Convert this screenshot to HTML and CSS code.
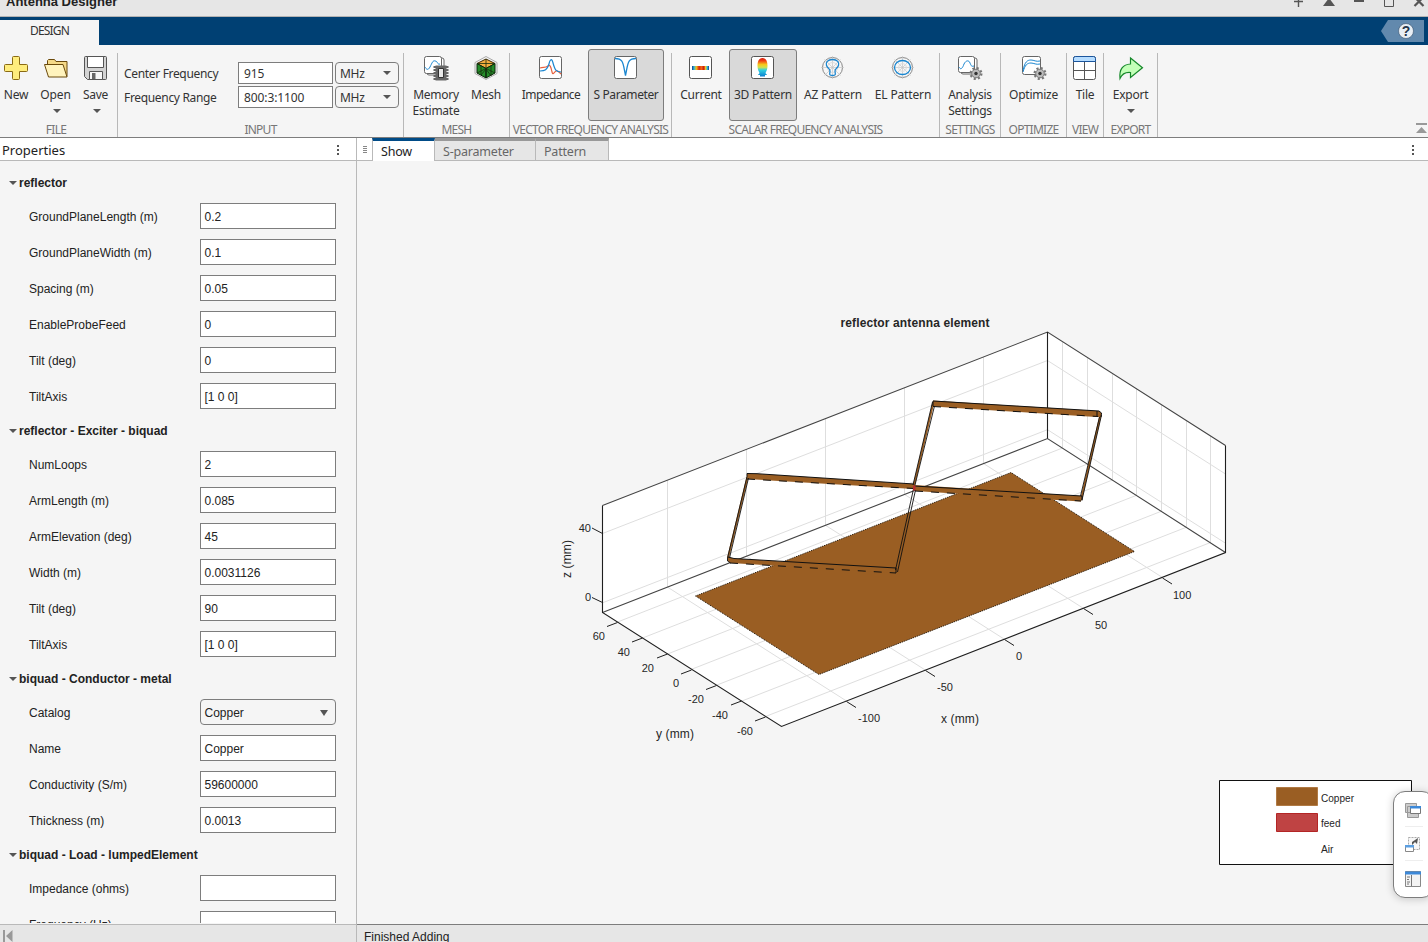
FILE: index.html
```html
<!DOCTYPE html>
<html lang="en">
<head>
<meta charset="utf-8">
<title>Antenna Designer</title>
<link rel="stylesheet" href="styles.css">
</head>
<body>
<div class="app">
  <header class="titlebar">
    <span class="title">Antenna Designer</span>
    <svg class="winctl" width="138" height="16" viewBox="1290 0 138 16"><path d="M1294 1.500h9M1298.500 0v7" stroke="#555" stroke-width="1.400"/><path d="M1323 6l6-8 6 8z" fill="#555"/><path d="M1354 1h10" stroke="#555" stroke-width="2"/><path d="M1384.500-3v9.500h9v-9.500" fill="none" stroke="#555"/><path d="M1414.500 6l9-9M1423.500 6l-9-9" stroke="#555" stroke-width="2.200"/></svg>
  </header>
  <div class="ribbon-tabs">
    <div class="ribbon-tab">DESIGN</div>
    <svg class="help" width="43" height="22" viewBox="0 0 43 22"><path d="M0 11L7 0h36v22H7z" fill="#6289ad"/><circle cx="25" cy="11" r="7.500" fill="#e8eef4" stroke="#37506c" stroke-width=".6"/><text x="25" y="16" text-anchor="middle" class="help-mark">?</text></svg>
  </div>

  <div class="toolstrip">
    <section class="sec s-file">
      <div class="btns">
        <div class="btn b-new"><svg width="26" height="26" viewBox="0 0 26 26"><path d="M10.500 1.500h5a1 1 0 0 1 1 1v7h7a1 1 0 0 1 1 1v5a1 1 0 0 1-1 1h-7v7a1 1 0 0 1-1 1h-5a1 1 0 0 1-1-1v-7h-7a1 1 0 0 1-1-1v-5a1 1 0 0 1 1-1h7v-7a1 1 0 0 1 1-1z" fill="#ffed7d" stroke="#8a6a14"/></svg><span>New</span></div>
        <div class="btn b-open"><svg width="26" height="26" viewBox="0 0 26 26"><path d="M4.500 9.500V5.500l1-1h6l1.500 2h11v15h-18z" fill="#f5d987" stroke="#6b4a0c"/><path d="M1.500 9.500h18.500l4 12.500H5.500z" fill="#fff3bd" stroke="#6b4a0c"/></svg><span>Open</span><i class="down"></i></div>
        <div class="btn b-save"><svg width="26" height="26" viewBox="0 0 26 26"><path d="M2.500 1.500h20a1 1 0 0 1 1 1v21a1 1 0 0 1-1 1h-18l-3-3v-19a1 1 0 0 1 1-1z" fill="#d3d3d3" stroke="#555"/><path d="M4.500 1.500h16v11h-16z" fill="#fff" stroke="#555"/><path d="M6.500 16.500h13v8h-13z" fill="#f7f7f7" stroke="#555"/><path d="M9 18h3.500v6H9z" fill="#666"/></svg><span>Save</span><i class="down"></i></div>
      </div>
      <h2>FILE</h2>
    </section>
    <section class="sec s-input">
      <div class="inputs">
        <label>Center Frequency</label><div class="field">915</div><div class="combo">MHz<i class="down"></i></div>
        <label>Frequency Range</label><div class="field">800:3:1100</div><div class="combo">MHz<i class="down"></i></div>
      </div>
      <h2>INPUT</h2>
    </section>
    <section class="sec s-mesh">
      <div class="btns">
        <div class="btn b-mem"><svg width="26" height="26" viewBox="0 0 26 26"><rect x="4" y="3" width="17" height="17" rx="2" fill="#fff" stroke="#666"/><rect x="1.500" y="1.500" width="17" height="17" rx="2" fill="#fff" stroke="#666"/><path d="M2 12c1 2 3 4 5 0 2-4 3-7 5-6 3 0 2 4 5 3" fill="none" stroke="#1a86d0"/><path d="M12.500 10.500h11v15h-11z" fill="#666"/><path d="M10.500 12h15M10.500 15h15M10.500 18h15M10.500 21h15M10.500 24h15" stroke="#666" stroke-width="1.800"/><path d="M15.500 13.500h5v9h-5z" fill="#e8e8e8" stroke="#333"/></svg><span>Memory<br>Estimate</span></div>
        <div class="btn b-msh"><svg width="26" height="26" viewBox="0 0 26 26"><path d="M13 1.500l11 6v11L13 24.500l-11-6v-11z" fill="#f5f5f5" stroke="#aaa"/><path d="M13 4l9 4.500-9 5-9-5z" fill="#f3ad3f" stroke="#3b2604"/><path d="M4 8.500l9 5V23l-9-5zM22 8.500l-9 5V23l9-5z" fill="#238c28" stroke="#0a250a"/><path d="M13 4v9.500M4 8.500h18M13 13.500L4 18M8 11v9l5-6 5 7V11M13 13.500l9 4.500" fill="none" stroke="#172d0e" stroke-width=".8"/></svg><span>Mesh</span></div>
      </div>
      <h2>MESH</h2>
    </section>
    <section class="sec s-vec">
      <div class="btns">
        <div class="btn b-imp"><svg width="26" height="26" viewBox="0 0 26 26"><rect x="1.500" y="1.500" width="22" height="22" rx="2" fill="#fff" stroke="#666"/><path d="M2 13c4-1 5 0 8-2 2-2 3 1 4 6 1 4 2 0 4-1s3 1 5 3" fill="none" stroke="#e8603c" stroke-width="1.200"/><path d="M2 16c5 0 7-1 9-7 1-5 3-6 4-1 2 7 3 9 8 9" fill="none" stroke="#1a86d0" stroke-width="1.200"/></svg><span>Impedance</span></div>
        <div class="btn b-spar sel"><svg width="26" height="26" viewBox="0 0 26 26"><rect x="1.500" y="1.500" width="22" height="22" rx="2" fill="#fff" stroke="#666"/><path d="M2 3.500c7 0 8 3 9.500 12l1 5 1-5C15 6.500 16 3.500 23 3.500" fill="none" stroke="#1a86d0" stroke-width="1.300"/></svg><span>S Parameter</span></div>
      </div>
      <h2>VECTOR FREQUENCY ANALYSIS</h2>
    </section>
    <section class="sec s-sca">
      <div class="btns">
        <div class="btn b-cur"><svg width="26" height="26" viewBox="0 0 26 26"><defs><linearGradient id="jet"><stop offset="0" stop-color="#12358a"/><stop offset=".12" stop-color="#29b8dc"/><stop offset=".25" stop-color="#f2c21c"/><stop offset=".42" stop-color="#d8200e"/><stop offset=".55" stop-color="#f06a15"/><stop offset=".7" stop-color="#c81410"/><stop offset=".8" stop-color="#f2d32c"/><stop offset=".9" stop-color="#29b8dc"/><stop offset="1" stop-color="#12358a"/></linearGradient><linearGradient id="lobe" x2="0" y2="1"><stop offset="0" stop-color="#d8200e"/><stop offset=".15" stop-color="#f03c14"/><stop offset=".35" stop-color="#f6c51b"/><stop offset=".5" stop-color="#d5e04a"/><stop offset=".65" stop-color="#2fd0e0"/><stop offset="1" stop-color="#0b7fd0"/></linearGradient></defs><rect x="1.500" y="1.500" width="22" height="22" rx="2" fill="#fff" stroke="#555"/><path d="M4 11h17v4H4z" fill="url(#jet)"/></svg><span>Current</span></div>
        <div class="btn b-3d sel"><svg width="26" height="26" viewBox="0 0 26 26"><rect x="1.500" y="1.500" width="22" height="22" rx="2" fill="#fff" stroke="#555"/><path d="M12.500 3c4 0 5 4 5 8 0 3-1 5-2 7 0 1 1.500 1 1.500 2h-2v1.500h-5V20H8c0-1 1.500-1 1.500-2-1-2-2-4-2-7 0-4 1-8 5-8z" fill="url(#lobe)"/></svg><span>3D Pattern</span></div>
        <div class="btn b-az"><svg width="26" height="26" viewBox="0 0 26 26"><circle cx="12.500" cy="12.500" r="10" fill="#f7f7f7" stroke="#888"/><path d="M12.500 1v23M1 12.500h23M4.500 4.500l16 16M20.500 4.500l-16 16" stroke="#c4c4c4" stroke-width=".7"/><circle cx="12.500" cy="12.500" r="5" fill="none" stroke="#ddd"/><path d="M12.500 4.500c5 0 7 3 6 6s-4 3-3.500 6 1 4-2.500 4-3-1-2.500-4-2.500-3-3.500-6 1-6 6-6z" fill="none" stroke="#1a86d0" stroke-width="1.300"/></svg><span>AZ Pattern</span></div>
        <div class="btn b-el"><svg width="26" height="26" viewBox="0 0 26 26"><circle cx="12.500" cy="12.500" r="10" fill="#f7f7f7" stroke="#888"/><path d="M12.500 1v23M1 12.500h23M4.500 4.500l16 16M20.500 4.500l-16 16" stroke="#c4c4c4" stroke-width=".7"/><circle cx="12.500" cy="12.500" r="4" fill="none" stroke="#ddd"/><ellipse cx="12.500" cy="12.500" rx="8" ry="7" fill="none" stroke="#1a86d0" stroke-width="1.300"/></svg><span>EL Pattern</span></div>
      </div>
      <h2>SCALAR FREQUENCY ANALYSIS</h2>
    </section>
    <section class="sec s-set">
      <div class="btns">
        <div class="btn b-ana"><svg width="26" height="26" viewBox="0 0 26 26"><rect x="4" y="3" width="16" height="16" rx="2" fill="#fff" stroke="#666"/><rect x="1.500" y="1.500" width="16" height="16" rx="2" fill="#fff" stroke="#666"/><path d="M2 12c2 4 4 0 5-3 2-4 5-4 6-1 1 2 1 4 4 3" fill="none" stroke="#1a86d0"/><g id="gear"><circle cx="19" cy="18.500" r="5.400" fill="none" stroke="#777" stroke-width="2.200" stroke-dasharray="2.100 2.140"/><circle cx="19" cy="18.500" r="4.300" fill="#bbb" stroke="#777"/><circle cx="19" cy="18.500" r="1.700" fill="#333"/></g></svg><span>Analysis<br>Settings</span></div>
      </div>
      <h2>SETTINGS</h2>
    </section>
    <section class="sec s-opt">
      <div class="btns">
        <div class="btn b-opt"><svg width="26" height="26" viewBox="0 0 26 26"><rect x="1.500" y="1.500" width="18" height="18" rx="2" fill="#fff" stroke="#666"/><path d="M2 15c2-8 4-10 8-10 3 0 5 2 9 1M2 17c2-7 4-9 8-9 3 0 5 2 9 1" fill="none" stroke="#1a86d0"/><use href="#gear"/></svg><span>Optimize</span></div>
      </div>
      <h2>OPTIMIZE</h2>
    </section>
    <section class="sec s-view">
      <div class="btns">
        <div class="btn b-tile"><svg width="26" height="26" viewBox="0 0 26 26"><rect x="1.500" y="1.500" width="22" height="23" rx="2" fill="#fff" stroke="#555"/><path d="M12.500 7v17M2 15.500h21" stroke="#555"/><path d="M1.500 6.500v-3a2 2 0 0 1 2-2h18a2 2 0 0 1 2 2v3z" fill="#b5dcff" stroke="#1b559d"/></svg><span>Tile</span></div>
      </div>
      <h2>VIEW</h2>
    </section>
    <section class="sec s-exp">
      <div class="btns">
        <div class="btn b-exp"><svg width="26" height="26" viewBox="0 0 26 26"><path d="M12.500 3L24.500 12.700 12.500 22.500V17.500C7 17 4 19 2 23.500 1 14 5 9.500 12.500 9z" fill="#c3ffb8" stroke="#15882a" stroke-width="1.200"/></svg><span>Export</span><i class="down"></i></div>
      </div>
      <h2>EXPORT</h2>
    </section>
    <svg class="collapse" width="11" height="11" viewBox="0 0 11 11"><path d="M0 0h11v2H0zM0 10l5.500-6 5.500 6z" fill="#999"/></svg>
  </div>

  <div class="workspace">
    <aside class="props">
      <div class="props-head"><span>Properties</span><i class="dots"></i></div>
      <div class="props-body">
        <h3><i class="down"></i>reflector</h3>
        <div class="row"><label>GroundPlaneLength (m)</label><div class="val">0.2</div></div>
        <div class="row"><label>GroundPlaneWidth (m)</label><div class="val">0.1</div></div>
        <div class="row"><label>Spacing (m)</label><div class="val">0.05</div></div>
        <div class="row"><label>EnableProbeFeed</label><div class="val">0</div></div>
        <div class="row"><label>Tilt (deg)</label><div class="val">0</div></div>
        <div class="row"><label>TiltAxis</label><div class="val">[1 0 0]</div></div>
        <h3><i class="down"></i>reflector - Exciter - biquad</h3>
        <div class="row"><label>NumLoops</label><div class="val">2</div></div>
        <div class="row"><label>ArmLength (m)</label><div class="val">0.085</div></div>
        <div class="row"><label>ArmElevation (deg)</label><div class="val">45</div></div>
        <div class="row"><label>Width (m)</label><div class="val">0.0031126</div></div>
        <div class="row"><label>Tilt (deg)</label><div class="val">90</div></div>
        <div class="row"><label>TiltAxis</label><div class="val">[1 0 0]</div></div>
        <h3><i class="down"></i>biquad - Conductor - metal</h3>
        <div class="row"><label>Catalog</label><div class="val pick">Copper<i class="down"></i></div></div>
        <div class="row"><label>Name</label><div class="val">Copper</div></div>
        <div class="row"><label>Conductivity (S/m)</label><div class="val">59600000</div></div>
        <div class="row"><label>Thickness (m)</label><div class="val">0.0013</div></div>
        <h3><i class="down"></i>biquad - Load - lumpedElement</h3>
        <div class="row"><label>Impedance (ohms)</label><div class="val"></div></div>
        <div class="row"><label>Frequency (Hz)</label><div class="val"></div></div>
      </div>
    </aside>
    <main class="docs">
      <div class="doc-tabs">
        <svg class="grip" width="15" height="22" viewBox="0 0 15 22"><path d="M6 8.500h4M6 10.500h4M6 12.500h4M6 14.500h4" stroke="#888"/></svg>
        <div class="tab active">Show</div><div class="tab t-s">S-parameter</div><div class="tab t-p">Pattern</div>
        <i class="dots"></i>
      </div>
      <svg class="plot" width="1071" height="763" viewBox="357 161 1071 763">
        <path d="M602.500 505.500L1047.500 332l178 113.500v107L781.500 726.500l-179-114z" fill="#fff"/>
        <g class="grid">
          <path d="M667.500 480.200V587.100L846.500 701M746.500 449.400V556.200l179 114M825.500 418.600V525.300l179 114M904.500 387.800V494.400l179 114M983.500 357V463.500l179 114"/>
          <path d="M1062.500 341.600V448l-445 174M1087.500 357.500V464l-445 174M1112.500 373.400V480l-445 174M1136.500 388.700V495.300l-445 174M1161.500 404.700V511.200l-445 174M1186.500 420.600V527.200l-445 174M1210.500 435.900V542.500l-445 174"/>
          <path d="M602.500 533.500L1047.500 360.500l178 113.500M602.500 602.800L1047.500 429.700l178 113.500"/>
        </g>
        <path class="axis soft" d="M602.500 505.500L1047.500 332l178 113.500M602.500 612.500L1047.500 438.500l178 114"/>
        <path class="axis" d="M602.500 505.500v107l179 114 444-174v-107M1047.500 332v106.500"/>
        <path class="axis tick" d="M592 528l10.500 5.500M592 597.500l10.500 5M617.500 622.500l-10.500 4M642.500 638l-10.500 4M667.500 654l-10.500 4M691.500 670l-10.500 4M716.500 685.500l-10.500 4M741.500 701l-10.500 4M765.500 717l-10.500 4M846.500 701.500l9.500 6M925.500 670.500l9.500 6M1004.500 639.500l9.500 6M1083.500 608.500l9.500 6M1162.500 578l9.500 6"/>
        <path d="M695.500 596L1011 472.500l123.500 79L819 674.500z" fill="#9a5e23" stroke="#1b1208" stroke-dasharray="1 1"/>
        <g fill="#9a5e23">
          <path d="M747 473.500l10 .2L914 484v5L747 479zM914 485l168 11-1 5.500L915 491zM933 400.500L1099 411l2.500 2-.5 4h-5L933 406.500zM728 557l6 1.500L896 568v5L730 563l-3-3z"/>
        </g>
        <g class="arm">
          <path class="core" d="M747.500 477L728 558M933.500 402L914 485M1100.500 415L1081 500"/>
          <path d="M747 473.500l10 .2L914 484M914 486l168 10v4.500M933 406v-5L1099 411l2.500 2-.5 4M728 557l6 1.500L896 568v5M1097 411v5"/>
          <path d="M747 479L914 488.500M915 491l166 10M933 406.500L1098 416.500M730 563L896 573" stroke-dasharray="8 8"/>
          <path class="rim" d="M747 473.500v3L727.500 558M748.500 478L729.500 558M932.500 402L913 485M934.500 406L915 485M1101.500 415L1082 500M1099.500 417L1080.500 496M913.500 489L895.500 570M915.500 490L897.500 572M727.500 558v3l3 2"/>
        </g>
        <path d="M913 485.500h2.500v5H913z" fill="#b82c2c"/>
        <g class="ticks">
          <text x="591" y="532" text-anchor="end">40</text><text x="591" y="601" text-anchor="end">0</text>
          <text x="605" y="640" text-anchor="end">60</text><text x="630" y="656" text-anchor="end">40</text><text x="654" y="672" text-anchor="end">20</text><text x="679" y="687" text-anchor="end">0</text><text x="704" y="703" text-anchor="end">-20</text><text x="728" y="719" text-anchor="end">-40</text><text x="753" y="735" text-anchor="end">-60</text>
          <text x="858" y="722">-100</text><text x="937" y="691">-50</text><text x="1016" y="660">0</text><text x="1095" y="629">50</text><text x="1173" y="599">100</text>
        </g>
        <text x="941" y="723" textLength="38">x (mm)</text><text x="656" y="738" textLength="38">y (mm)</text><text transform="translate(571 578) rotate(-90)" textLength="38">z (mm)</text>
        <text x="840.500" y="327" class="plot-title" textLength="149">reflector antenna element</text>
        <path d="M1219.500 780.500h192v84h-192z" fill="#fff" stroke="#111"/>
        <path d="M1276.500 787.500h41v18h-41z" fill="#9a5e23" stroke="#b07a44"/><path d="M1276.500 813.500h41v18h-41z" fill="#bf4343" stroke="#b32525"/>
        <g class="ticks"><text x="1321" y="802" textLength="33" lengthAdjust="spacingAndGlyphs">Copper</text><text x="1321" y="827" textLength="19.500" lengthAdjust="spacingAndGlyphs">feed</text><text x="1321" y="853" textLength="12.500" lengthAdjust="spacingAndGlyphs">Air</text></g>
      </svg>
      <div class="dock">
        <svg width="18" height="18" viewBox="0 0 18 18"><path d="M1.500 1.500h11v9h-11zM3.500 4.500h11v11h-11z" fill="#ccc" stroke="#999"/><path d="M6.500 4.500h10v7h-10z" fill="#fff" stroke="#777"/><path d="M6 4h11v2.500H6z" fill="#3c88d8"/></svg>
        <hr>
        <svg width="18" height="18" viewBox="0 0 18 18"><path d="M4.500 1.500h11v12h-11z" fill="#f7f7f7" stroke="#aaa" stroke-dasharray="2 1"/><path d="M8 6l6-4-1 6-2-2-3 3z" fill="#555"/><path d="M1.500 9.500h8v6h-8z" fill="#fff" stroke="#888"/><path d="M1 9h9v2.500H1z" fill="#5b9fe2"/></svg>
        <hr>
        <svg width="18" height="18" viewBox="0 0 18 18"><path d="M1.500 1.500h15v15h-15z" fill="#f3f3f3" stroke="#888"/><path d="M7.500 5v11M3 7h3M3 9.500h2M3 12h3M3 14h2" stroke="#777"/><path d="M1 1.500h16v3H1z" fill="#3c88d8"/></svg>
      </div>
    </main>
  </div>
  <footer class="status">
    <div class="st-left"><svg width="10" height="12" viewBox="0 0 10 12"><path d="M0 0h2v12H0zM9.500 0v12L3 6z" fill="#999"/></svg></div>
    <div class="st-right">Finished Adding</div>
  </footer>
</div>
</body>
</html>
```
FILE: styles.css
```css
* { box-sizing: border-box; }
html, body { margin: 0; overflow: hidden; }
body { font: 12px/16px "Liberation Sans", Arial, sans-serif; color: #222; }
svg { display: block; flex: none; }
.app { width: 1428px; height: 942px; display: flex; flex-direction: column; background: #f5f5f5; overflow: hidden; }
.titlebar { flex: none; height: 17px; background: #e6e6e6; border-bottom: 1px solid #b3b3b3; display: flex; justify-content: space-between; overflow: hidden; }
.title { font-weight: bold; font-size: 13px; line-height: 16px; margin: -6px 0 0 6px; }
.ribbon-tabs { flex: none; height: 28px; background: #004073; display: flex; justify-content: space-between; padding: 3px 4px 0 0; }
.ribbon-tab { width: 99px; background: #f5f5f5; text-align: center; font: 12px/22px "Noto Sans", sans-serif; letter-spacing: -.8px; color: #333; }
.help-mark { font: bold 14px "Liberation Sans", sans-serif; fill: #26364a; }
.toolstrip { position: relative; flex: none; height: 93px; display: flex; border-bottom: 1px solid #7d7d7d; padding-top: 4px; font-family: "Noto Sans", sans-serif; color: #333; }
.sec { flex: none; display: flex; flex-direction: column; height: 88px; background: linear-gradient(#b8b8b8, #b8b8b8) right 0 top 4px / 1px 84px no-repeat; }
.sec h2 { margin: 1px 0 0; font-weight: normal; font-size: 12px; line-height: 16px; height: 15px; color: #777; text-align: center; white-space: nowrap; letter-spacing: -.75px; padding-right: 1px; }
.s-file h2 { padding-right: 6px; }
.btns { display: flex; height: 72px; }
.btn { flex: none; display: flex; flex-direction: column; align-items: center; height: 72px; padding-top: 5px; border: 1px solid transparent; text-align: center; white-space: nowrap; font-size: 12px; letter-spacing: -.25px; }
.btn span { margin-top: 6px; }
.sel { background: #d9d9d9; border-color: #7d7d7d; border-radius: 3px; }
.down { display: block; flex: none; width: 0; height: 0; border: 4px solid transparent; border-top: 4px solid #555; border-bottom: 0; }
.btn .down { margin-top: 6px; }
.s-file { width: 118px; } .s-input { width: 286px; } .s-mesh { width: 106px; } .s-vec { width: 162px; } .s-sca { width: 268px; }
.s-set { width: 61px; } .s-opt { width: 66px; } .s-view { width: 37px; } .s-exp { width: 54px; }
.b-new { width: 32px; } .b-open { width: 47px; letter-spacing: -.1px; } .b-save { width: 33px; }
.b-save .down, .b-open .down { margin-left: 2px; }
.b-mem { width: 54px; margin: 0 5px; } .b-msh { width: 36px; }
.b-imp { width: 70px; margin: 0 2px 0 6px; letter-spacing: -.55px; } .b-spar { width: 76px; letter-spacing: -.4px; }
.b-cur { width: 50px; margin: 0 3px 0 4px; } .b-3d { width: 68px; margin-right: 2px; } .b-az { width: 68px; margin-right: 2px; letter-spacing: -.15px; } .b-el { width: 68px; letter-spacing: -.15px; }
.b-ana { width: 60px; } .b-opt { width: 65px; } .b-tile { width: 36px; } .b-exp { width: 53px; }
.inputs { height: 72px; display: grid; grid-template-columns: 114px 95px 66px; grid-auto-rows: 22px; row-gap: 2px; padding: 13px 0 0 6px; font-size: 12px; align-items: center; }
.inputs label { letter-spacing: -.33px; padding-top: 1px; }
.field { height: 22px; border: 1px solid #7d7d7d; background: #fff; padding-left: 5px; line-height: 22px; letter-spacing: -.1px; }
.combo { margin-left: 2px; height: 22px; border: 1px solid #7d7d7d; border-radius: 4px; padding: 1px 7px 0 4px; display: flex; align-items: center; justify-content: space-between; letter-spacing: -.3px; }
.combo .down { margin-top: -2px; }
.collapse { position: absolute; right: 1px; top: 78px; }
.workspace { flex: none; height: 786px; display: flex; }
.props { flex: none; width: 357px; border-right: 1px solid #b9b9b9; }
.props-head { height: 23px; background: #fff; border-bottom: 1px solid #b9b9b9; display: flex; align-items: center; justify-content: space-between; padding: 2px 17px 0 2px; font: 13px/20px "Noto Sans", sans-serif; }
.dots { width: 2px; height: 10px; background: linear-gradient(#555 2px, transparent 2px 4px, #555 4px 6px, transparent 6px 8px, #555 8px); }
.props-body { height: 762px; overflow: hidden; padding-top: 5px; }
.props-body h3 { margin: 0; height: 32px; padding: 2px 0 0 9px; display: flex; align-items: center; gap: 2px; font-size: 12px; }
.row { height: 36px; display: flex; align-items: center; padding-left: 29px; }
.row label { width: 171px; padding-top: 1px; }
.val { width: 136px; height: 26px; border: 1px solid #7d7d7d; background: #fff; padding: 1px 7px 0 3.500px; display: flex; align-items: center; justify-content: space-between; }
.pick { background: #f5f5f5; border-radius: 4px; }
.pick .down { border-width: 6px 4px 0; }
.docs { position: relative; flex: none; width: 1071px; }
.doc-tabs { height: 23px; background: #fff; border-bottom: 1px solid #b9b9b9; display: flex; font: 12.500px/21px "Noto Sans", sans-serif; }
.tab { height: 22px; border-top: 3px solid #999; border-right: 1px solid #b9b9b9; background: #e6e6e6; color: #666; padding-left: 8px; letter-spacing: -.2px; }
.tab.active { width: 63px; height: 23px; border-top-color: #004b87; border-left: 1px solid #b9b9b9; background: #fff; color: #222; }
.t-s { width: 101px; } .t-p { width: 73px; }
.doc-tabs .dots { margin: 7px 14px 0 auto; }
.plot text { font: 12px "Liberation Sans", sans-serif; fill: #262626; }
.plot .ticks text { font-size: 11px; }
.plot .plot-title { font-weight: bold; }
.grid path { fill: none; stroke: #dedede; }
.axis { fill: none; stroke: #1f1f1f; stroke-width: 1.100; }
.soft { stroke: #444; }
.tick { stroke-width: 1; }
.arm path { fill: none; stroke: #111; }
.arm .core { stroke: #9a5e23; stroke-width: 2; }
.arm .rim { stroke-width: .9; }
.dock { position: absolute; right: -6px; top: 653px; width: 41px; height: 107px; background: #fff; border: 1px solid #7d7d7d; border-radius: 12px; box-shadow: 0 1px 8px rgba(0,0,0,.2); padding: 10px 0 0 10px; }
.dock hr { width: 18px; margin: 6px 0 9px 1px; border: 0; border-top: 1px solid #eee; }
.status { flex: none; height: 18px; display: flex; background: #e6e6e6; }
.st-left { width: 357px; border-top: 1px solid #b9b9b9; border-right: 1px solid #b9b9b9; padding: 5px 0 0 3px; }
.st-right { flex: 1; border-top: 1px solid #7d7d7d; padding: 4px 0 0 7px; white-space: nowrap; }
```
